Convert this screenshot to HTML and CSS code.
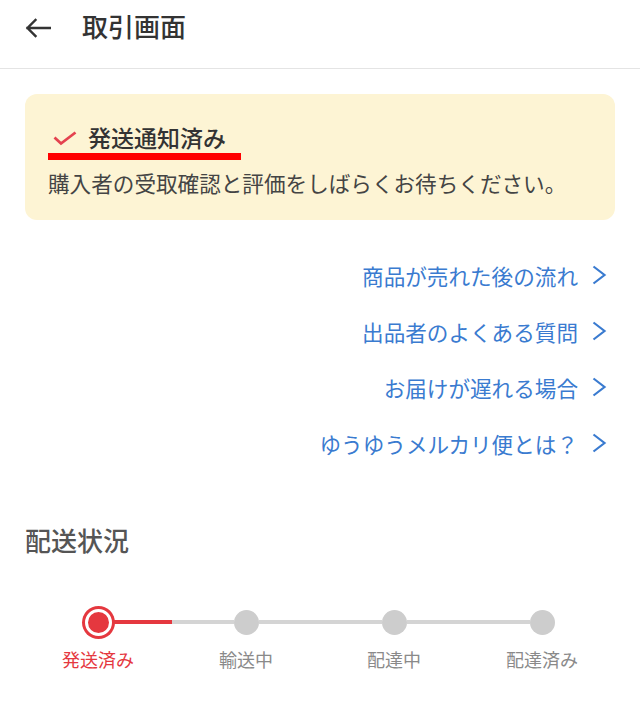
FILE: index.html
```html
<!DOCTYPE html>
<html lang="ja">
<head>
    <meta charset="UTF-8">
    <meta name="viewport" content="width=device-width, initial-scale=1.0">
    <title>取引画面</title>
    <link rel="stylesheet" href="styles.css">
</head>
<body>
    <header class="app-bar">
        <div class="app-bar-row">
            <svg class="back-icon" viewBox="0 0 26 20" width="26" height="20">
                <path d="M25 10H2.5M10.5 2L2.5 10l8 8" fill="none" stroke="#333" stroke-width="2.4" stroke-linecap="square"/>
            </svg>
            <h1 class="app-title">取引画面</h1>
        </div>
    </header>

    <main class="content">
        <!-- ステータスカード -->
        <section class="status-card">
            <div class="status-title">
                <svg class="check-icon" viewBox="0 0 24 15" width="24" height="15">
                    <path d="M1.5 6.5l6.5 6L22.5 1.5" fill="none" stroke="#e4424f" stroke-width="2.8"/>
                </svg>
                <span>発送通知済み</span>
            </div>
            <div class="status-mark"></div>
            <p class="status-text">購入者の受取確認と評価をしばらくお待ちください。</p>
        </section>

        <!-- ヘルプリンク -->
        <ul class="help-links">
            <li><a href="#">商品が売れた後の流れ<svg class="chevron" viewBox="0 0 24 24" width="24" height="24"><path d="M6.5 3.5l11 8.5-11 8.5" fill="none" stroke="#3a7bd0" stroke-width="2.2"/></svg></a></li>
            <li><a href="#">出品者のよくある質問<svg class="chevron" viewBox="0 0 24 24" width="24" height="24"><path d="M6.5 3.5l11 8.5-11 8.5" fill="none" stroke="#3a7bd0" stroke-width="2.2"/></svg></a></li>
            <li><a href="#">お届けが遅れる場合<svg class="chevron" viewBox="0 0 24 24" width="24" height="24"><path d="M6.5 3.5l11 8.5-11 8.5" fill="none" stroke="#3a7bd0" stroke-width="2.2"/></svg></a></li>
            <li><a href="#">ゆうゆうメルカリ便とは？<svg class="chevron" viewBox="0 0 24 24" width="24" height="24"><path d="M6.5 3.5l11 8.5-11 8.5" fill="none" stroke="#3a7bd0" stroke-width="2.2"/></svg></a></li>
        </ul>

        <!-- 配送状況 -->
        <h2 class="section-title">配送状況</h2>
        <ol class="stepper">
            <li class="step is-current">
                <div class="step-track">
                    <span class="track-line is-hidden"></span>
                    <span class="step-dot"></span>
                    <span class="track-line is-done"></span>
                </div>
                <span class="step-label">発送済み</span>
            </li>
            <li class="step">
                <div class="step-track">
                    <span class="track-line"></span>
                    <span class="step-dot"></span>
                    <span class="track-line"></span>
                </div>
                <span class="step-label">輸送中</span>
            </li>
            <li class="step">
                <div class="step-track">
                    <span class="track-line"></span>
                    <span class="step-dot"></span>
                    <span class="track-line"></span>
                </div>
                <span class="step-label">配達中</span>
            </li>
            <li class="step">
                <div class="step-track">
                    <span class="track-line"></span>
                    <span class="step-dot"></span>
                    <span class="track-line is-hidden"></span>
                </div>
                <span class="step-label">配達済み</span>
            </li>
        </ol>
    </main>
</body>
</html>
```

FILE: styles.css
```css
/* ベース */
body {
    margin: 0;
    background: #fff;
    font-family: "Noto Sans CJK JP", "Noto Sans", sans-serif;
    color: #333;
}

/* ヘッダー */
.app-bar {
    padding: 0 25px 16px;
    border-bottom: 1px solid #e4e4e4;
}

.app-bar-row {
    display: flex;
    align-items: center;
    height: 52px;
}

.back-icon {
    margin-top: 3px;
}

.app-title {
    margin: 0 0 0 31px;
    font-size: 26px;
    font-weight: 500;
    line-height: 34px;
    color: #333;
}

.content {
    padding: 0 25px;
}

/* ステータスカード */
.status-card {
    margin-top: 25px;
    background: #fdf4d4;
    border-radius: 12px;
    padding: 28px 23px 22px;
}

.status-title {
    display: flex;
    align-items: center;
    gap: 11px;
    padding-left: 5px;
    height: 30px;
    font-size: 23px;
    font-weight: 500;
    color: #333;
}

.check-icon {
    margin-top: 2px;
}

.status-mark {
    width: 193px;
    height: 7px;
    margin-top: 1px;
    background: #ff0000;
}

.status-text {
    margin: 8px 0 0;
    font-size: 21.6px;
    line-height: 30px;
    color: #444;
}

/* ヘルプリンク */
.help-links {
    list-style: none;
    margin: 27px 0 0;
    padding: 0 4px 0 0;
}

.help-links li {
    display: flex;
    justify-content: flex-end;
    align-items: center;
    height: 56px;
}

.help-links a {
    display: flex;
    align-items: center;
    gap: 9px;
    font-size: 21.6px;
    color: #3a7bd0;
    text-decoration: none;
}

/* 配送状況 */
.section-title {
    margin: 52px 0 0;
    font-size: 26px;
    font-weight: 500;
    line-height: 34px;
    color: #555;
}

.stepper {
    list-style: none;
    display: grid;
    grid-template-columns: repeat(4, 1fr);
    margin: 48px -1px 0;
    padding: 0;
}

.step {
    display: flex;
    flex-direction: column;
    align-items: center;
}

.step-track {
    display: flex;
    align-items: center;
    width: 100%;
    height: 34px;
}

.track-line {
    flex: 1;
    height: 4px;
    background: #d4d4d4;
}

.track-line.is-done {
    background: #e5383f;
}

.track-line.is-hidden {
    visibility: hidden;
}

.step-dot {
    width: 25px;
    height: 25px;
    border-radius: 50%;
    background: #cdcdcd;
    flex: none;
}

.is-current .step-dot {
    width: 21px;
    height: 21px;
    background: #e5383f;
    border: 3px solid #fff;
    box-shadow: 0 0 0 3px #e5383f;
}

.step-label {
    margin-top: 8px;
    font-size: 18px;
    line-height: 24px;
    color: #8a8a8a;
}

.is-current .step-label {
    color: #e5383f;
}
```
